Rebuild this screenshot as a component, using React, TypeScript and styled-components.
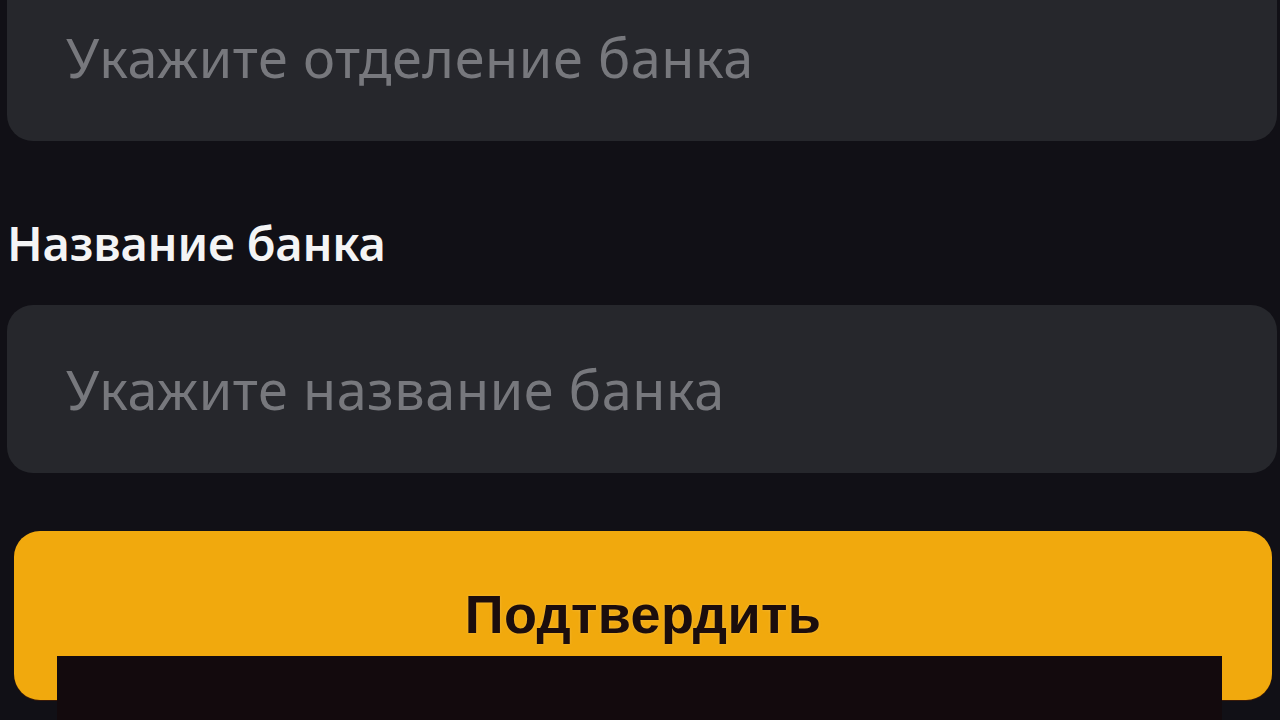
import React from "react";
import styled, { createGlobalStyle } from "styled-components";

const Global = createGlobalStyle`
  html, body { margin: 0; padding: 0; background: #111016; }
  body { width: 1280px; height: 720px; overflow: hidden; }
  #root { width: 1280px; height: 720px; }
`;

const Page = styled.div`
  width: 1280px;
  height: 720px;
  background: #111016;
  display: flex;
  flex-direction: column;
  box-sizing: border-box;
  padding: 0 3px 0 7px;
  overflow: hidden;
  font-family: "Noto Sans", "Open Sans", sans-serif;
`;

const Field = styled.div<{ $offset?: number }>`
  height: 168px;
  flex: none;
  margin-top: ${(p) => p.$offset ?? 0}px;
  background: #26272c;
  border-radius: 26px;
  display: flex;
  align-items: center;
  padding-left: 59px;
  box-sizing: border-box;
`;

const Placeholder = styled.span`
  color: #77787d;
  font-size: 54px;
  font-weight: 400;
  letter-spacing: 0.6px;
  line-height: 1;
`;

const Label = styled.div`
  color: #f4f4f5;
  font-size: 47px;
  font-weight: 600;
  letter-spacing: -0.2px;
  line-height: 1;
  margin: 79px 0 0 0;
  height: 85px;
`;

const ButtonWrap = styled.div`
  position: relative;
  flex: 1;
  margin-top: 58px;
  padding: 0 5px 0 7px;
`;

const Button = styled.div`
  height: 169px;
  background: #f1a90d;
  border-radius: 26px;
  box-shadow: 0 1px 0 #3a1a08;
  display: flex;
  justify-content: center;
  padding-top: 56px;
  box-sizing: border-box;
`;

const ButtonText = styled.span`
  font-family: "Liberation Sans", Arial, sans-serif;
  color: #1b0d0d;
  font-size: 54px;
  font-weight: 700;
  line-height: 1;
  letter-spacing: 0.3px;
  text-shadow: 0 0 3px rgba(255, 220, 150, 0.35);
`;

const Cover = styled.div`
  position: absolute;
  left: 50px;
  right: 55px;
  top: 125px;
  bottom: 0;
  background: #130a0d;
`;

export default function App() {
  return (
    <>
      <Global />
      <Page>
        <Field $offset={-27}>
          <Placeholder>Укажите отделение банка</Placeholder>
        </Field>
        <Label>Название банка</Label>
        <Field>
          <Placeholder>Укажите название банка</Placeholder>
        </Field>
        <ButtonWrap>
          <Button>
            <ButtonText>Подтвердить</ButtonText>
          </Button>
          <Cover />
        </ButtonWrap>
      </Page>
    </>
  );
}
